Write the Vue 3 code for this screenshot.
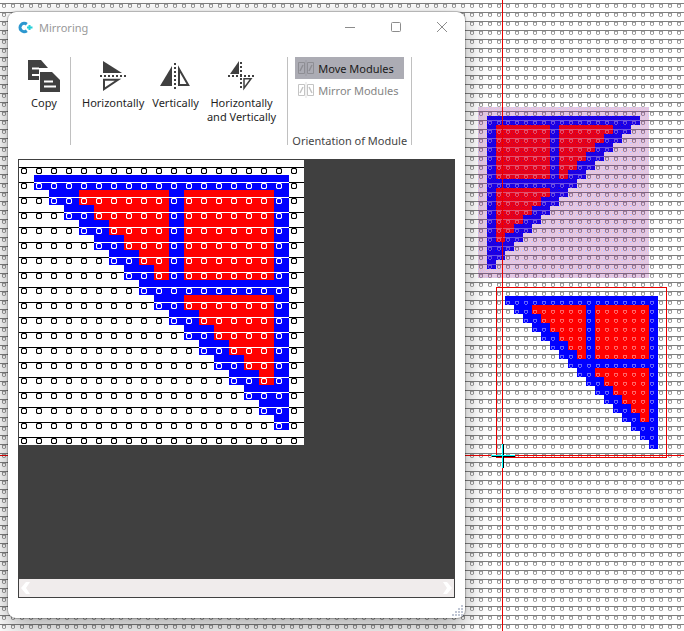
<script setup>
import { ref } from 'vue'

const COUNT = 17
const orientation = ref('move')

// Colour runs of the triangle: right angle at the top right corner.
function colourAt(row, col) {
  if (col < row) return null
  const frame = row === 0 || row === 7 || col === 9 || col === 16 || col - row < 2
  return frame ? '#0000ff' : '#ff0000'
}

function buildRuns(mirrored) {
  const runs = []
  for (let row = 0; row < COUNT; row++) {
    let last = null
    for (let col = 0; col < COUNT; col++) {
      const fill = colourAt(row, mirrored ? COUNT - 1 - col : col)
      if (last && last.fill === fill) last.w++
      else {
        last = fill ? { x: col, y: row, w: 1, fill } : null
        if (last) runs.push(last)
      }
    }
  }
  return runs
}

// Every second pixel of one 9 by 9 stitch cell.
function ditherPath(parity) {
  let d = ''
  for (let y = 0; y < 9; y++) {
    for (let x = 0; x < 9; x++) {
      if ((x + y) % 2 === parity) d += `M${x} ${y}h1v1h-1z`
    }
  }
  return d
}

const normal = buildRuns(false)
const mirrored = buildRuns(true)
const ditherBlue = ditherPath(0)
const ditherRed = ditherPath(1)
const ring = 'M3 8h4v1h-4zM3 13h4v1h-4zM2 9h1v4h-1zM7 9h1v4h-1z'
const ringSoft = 'M3 9h1v1h-1zM6 9h1v1h-1zM3 12h1v1h-1zM6 12h1v1h-1zM2 8h1v1h-1zM7 8h1v1h-1zM2 13h1v1h-1zM7 13h1v1h-1z'
</script>

<template>
  <main class="desktop">
    <svg class="board" aria-hidden="true" shape-rendering="crispEdges">
      <defs>
        <pattern id="grid" width="9" height="9" patternUnits="userSpaceOnUse">
          <rect width="9" height="9" fill="#fff" />
          <rect y="3" width="9" height="1" fill="#808080" />
          <path d="M2 4h1v3h-1zM5 4h1v3h-1z" fill="#999" />
          <path d="M3 4h2v1h-2zM3 7h2v1h-2z" fill="#aaa" />
          <path d="M2 7h1v1h-1zM5 7h1v1h-1z" fill="#ddd" />
        </pattern>
        <pattern id="rings" width="9" height="9" patternUnits="userSpaceOnUse">
          <path d="M2 4h1v3h-1zM5 4h1v3h-1zM3 4h2v1h-2zM3 7h2v1h-2z" fill="#fff" fill-opacity=".4" />
        </pattern>
        <pattern id="rows" width="9" height="9" patternUnits="userSpaceOnUse">
          <rect y="3" width="9" height="1" fill="#fff" fill-opacity=".4" />
        </pattern>
        <pattern id="dither" x="478" y="107" width="9" height="9" patternUnits="userSpaceOnUse">
          <path :d="ditherRed" fill="#ff0000" fill-opacity=".22" />
          <path :d="ditherBlue" fill="#0000ff" fill-opacity=".22" />
        </pattern>
      </defs>

      <rect width="100%" height="100%" fill="url(#grid)" />

      <g v-for="(r, i) in mirrored" :key="'m' + i">
        <rect :x="487 + r.x * 9" :y="116 + r.y * 9" :width="r.w * 9" height="9" :fill="r.fill" />
        <rect :x="487 + r.x * 9" :y="116 + r.y * 9" :width="r.w * 9" height="9" fill="url(#rings)" />
        <rect :x="487 + r.x * 9" :y="116 + r.y * 9" :width="r.w * 9" height="9" fill="url(#rows)" />
      </g>
      <rect x="478" y="107" width="171" height="171" fill="url(#dither)" />

      <g v-for="(r, i) in normal" :key="'n' + i">
        <rect :x="505 + r.x * 9" :y="296 + r.y * 9" :width="r.w * 9" height="9" :fill="r.fill" />
        <rect :x="505 + r.x * 9" :y="296 + r.y * 9" :width="r.w * 9" height="9" fill="url(#rings)" />
      </g>

      <path d="M496 287h171v171h-171zM497 288v169h169v-169z" fill="#e80000" fill-rule="evenodd" />
      <rect y="455" width="100%" height="1" fill="#e80000" />
      <rect x="502" width="1" height="100%" fill="#e80000" />
      <path d="M503 444h1v24h-1zM492 456h23v1h-23z" fill="#000" />
      <path d="M502 444h1v24h-1zM491 455h24v1h-24z" fill="#00ffff" />
    </svg>

    <section class="dialog" aria-labelledby="dialog-title">
      <header class="titlebar">
        <svg class="logo" width="16" height="14" viewBox="0 0 16 14" aria-hidden="true">
          <path d="M8.800 3.200A4.200 4.200 0 1 0 8.800 9.800" fill="none" stroke="#2c97cf" stroke-width="3" />
          <path d="M11.500 4v5M9 6.500h5.500" stroke="#25cfd8" stroke-width="2" />
        </svg>
        <h1 id="dialog-title">Mirroring</h1>
        <div class="window-buttons">
          <button type="button" aria-label="Minimize">
            <svg width="12" height="12" viewBox="0 0 12 12"><path d="M1 5.500h10" /></svg>
          </button>
          <button type="button" aria-label="Maximize">
            <svg width="12" height="12" viewBox="0 0 12 12"><rect x="1.500" y=".5" width="9" height="9" rx="1" /></svg>
          </button>
          <button type="button" aria-label="Close">
            <svg width="12" height="12" viewBox="0 0 12 12"><path d="M1 0l10 10M11 0L1 10" /></svg>
          </button>
        </div>
      </header>

      <div class="ribbon">
        <div class="group copy-group">
          <button type="button" class="command">
            <svg width="34" height="36" viewBox="0 0 34 36" aria-hidden="true">
              <path d="M1 2h13l7 8h-9v12H1z" fill="#404040" />
              <path d="M5 10.500h7M5 17h7" stroke="#fff" stroke-width="2" />
              <path d="M12 13h14l8 8v13H12z" fill="#fff" />
              <path d="M13 14h12l8 8v12H13z" fill="#404040" />
              <path d="M17 23.500h9M17 28.500h12" stroke="#fff" stroke-width="2" />
            </svg>
            <span>Copy</span>
          </button>
        </div>

        <div class="group mirror-group">
          <button type="button" class="command">
            <svg width="34" height="36" viewBox="0 0 34 36" aria-hidden="true">
              <path d="M7 3v12h19z" fill="#404040" />
              <path d="M4 18h26" stroke="#404040" stroke-width="2" stroke-dasharray="2 2" shape-rendering="crispEdges" />
              <path d="M8 21.800v9.400l14-9.400z" fill="none" stroke="#404040" stroke-width="2" />
            </svg>
            <span>Horizontally</span>
          </button>
          <button type="button" class="command">
            <svg width="34" height="36" viewBox="0 0 34 36" aria-hidden="true">
              <path d="M13 8v20H1z" fill="#404040" />
              <path d="M16 5v26" stroke="#404040" stroke-width="2" stroke-dasharray="2 2" shape-rendering="crispEdges" />
              <path d="M20 11v16h9.200z" fill="none" stroke="#404040" stroke-width="2" />
            </svg>
            <span>Vertically</span>
          </button>
          <button type="button" class="command">
            <svg width="34" height="36" viewBox="0 0 34 36" aria-hidden="true">
              <path d="M14 3v13H5z" fill="#404040" />
              <path d="M16 4v26M3 18h26" stroke="#404040" stroke-width="2" stroke-dasharray="2 2" shape-rendering="crispEdges" />
              <path d="M19 20.800v9.400l7-9.400z" fill="none" stroke="#404040" stroke-width="1.500" />
            </svg>
            <span>Horizontally<br />and Vertically</span>
          </button>
        </div>

        <div class="group module-group">
          <button type="button" class="option" :class="{ active: orientation === 'move' }" :aria-pressed="orientation === 'move'" @click="orientation = 'move'">
            <svg width="16" height="16" viewBox="0 0 16 16" aria-hidden="true">
              <path d="M.5 2.500h6v11h-6zM9.500 2.500h6v11h-6z" />
              <path d="M2 11l3-6M11 11l3-6" stroke-width="1.500" />
              <path d="M8 0v16" opacity=".5" />
            </svg>
            <span>Move Modules</span>
          </button>
          <button type="button" class="option" :class="{ active: orientation === 'mirror' }" :aria-pressed="orientation === 'mirror'" @click="orientation = 'mirror'">
            <svg width="16" height="16" viewBox="0 0 16 16" aria-hidden="true">
              <path d="M.5 2.500h6v11h-6zM9.500 2.500h6v11h-6z" />
              <path d="M2 11l3-6M11 5l3 6" stroke-width="1.500" />
              <path d="M8 0v16" opacity=".5" />
            </svg>
            <span>Mirror Modules</span>
          </button>
          <p class="caption">Orientation of Module</p>
        </div>
      </div>

      <div class="preview">
        <div class="canvas">
          <svg width="285" height="285" viewBox="0 0 285 285" role="img" aria-label="Pattern preview" shape-rendering="crispEdges">
            <defs>
              <pattern id="stitch-dark" width="15" height="15" patternUnits="userSpaceOnUse">
                <rect y="7" width="15" height="1" fill="#000" />
                <path :d="ring" fill="#000" />
                <path :d="ringSoft" fill="#000" fill-opacity=".35" />
              </pattern>
              <pattern id="stitch-light" width="15" height="15" patternUnits="userSpaceOnUse">
                <rect y="7" width="15" height="1" fill="#fff" />
                <path :d="ring" fill="#fff" />
                <path :d="ringSoft" fill="#fff" fill-opacity=".35" />
              </pattern>
            </defs>
            <rect width="285" height="285" fill="#fff" />
            <rect width="285" height="285" fill="url(#stitch-dark)" />
            <g v-for="(r, i) in normal" :key="i">
              <rect :x="15 + r.x * 15" :y="15 + r.y * 15" :width="r.w * 15" height="15" :fill="r.fill" />
              <rect :x="15 + r.x * 15" :y="15 + r.y * 15" :width="r.w * 15" height="15" fill="url(#stitch-light)" />
            </g>
          </svg>
        </div>
        <div class="scrollbar">
          <button type="button" aria-label="Scroll left">
            <svg width="10" height="12" viewBox="0 0 10 12"><path d="M5 0h4L5 6l4 6H5L0 6z" fill="#fff" /></svg>
          </button>
          <button type="button" aria-label="Scroll right">
            <svg width="10" height="12" viewBox="0 0 10 12"><path d="M5 0H1l4 6-4 6h4l5-6z" fill="#fff" /></svg>
          </button>
        </div>
      </div>

      <svg class="grip" width="12" height="12" viewBox="0 0 12 12" aria-hidden="true">
        <path d="M9 0h2v2h-2zM6 3h2v2h-2zM9 3h2v2h-2zM3 6h2v2h-2zM6 6h2v2h-2zM9 6h2v2h-2zM0 9h2v2h-2zM3 9h2v2h-2zM6 9h2v2h-2zM9 9h2v2h-2z" fill="#c0c6d4" />
      </svg>
    </section>
  </main>
</template>

<style>
body {
  margin: 0;
}
</style>

<style scoped>
.desktop {
  position: relative;
  box-sizing: border-box;
  display: flex;
  min-height: 100vh;
  padding: 12px 219px 13px 8px;
  overflow: hidden;
  font-family: "Noto Sans", "Open Sans", sans-serif;
  font-size: 11px;
  line-height: 14px;
  color: #1f1f1f;
}

.board {
  position: absolute;
  inset: 0;
  width: 100%;
  height: 100%;
}

.dialog {
  position: relative;
  display: flex;
  flex: 1;
  flex-direction: column;
  min-width: 0;
  box-sizing: border-box;
  padding: 0 10px 20px;
  background: #fff;
  border-radius: 8px;
  box-shadow: 0 0 1px 1px rgba(0, 0, 0, 0.25), 0 8px 24px rgba(0, 0, 0, 0.35);
}

button {
  padding: 0;
  border: 0;
  background: none;
  color: inherit;
  font: inherit;
}

.titlebar {
  display: flex;
  align-items: center;
  height: 31px;
}

.logo {
  margin-right: 5px;
}

h1 {
  margin: 0;
  font-size: 11px;
  font-weight: 400;
  color: #999;
}

.window-buttons {
  display: flex;
  margin-left: auto;
  margin-right: -10px;
}

.window-buttons button {
  display: grid;
  place-items: center;
  width: 46px;
  height: 31px;
}

.window-buttons svg {
  fill: none;
  stroke: #8c8c8c;
}

.ribbon {
  display: flex;
  padding: 14px 0;
}

.group {
  box-sizing: border-box;
  display: flex;
  height: 88px;
  border-right: 1px solid #c0c0c0;
}

.copy-group {
  padding: 0 7px;
}

.copy-group .command {
  width: 38px;
}

.mirror-group {
  padding: 0 7px;
}

.command {
  display: flex;
  flex-direction: column;
  align-items: center;
  gap: 2px;
  padding-top: 1px;
  text-align: center;
  white-space: nowrap;
}

.mirror-group .command {
  padding: 1px 4px 0;
}

.module-group {
  flex-direction: column;
  align-items: stretch;
  width: 124px;
  padding: 0 7px;
}

.option {
  display: flex;
  align-items: center;
  gap: 4px;
  height: 22px;
  padding: 0 3px;
  color: #858585;
  white-space: nowrap;
}

.option span {
  padding-top: 2px;
}

.option svg {
  fill: none;
  stroke: #c4c4c4;
}

.option.active {
  background: #acacb4;
  color: #1a1a1a;
}

.option.active svg {
  stroke: #8e8e94;
}

.caption {
  margin: auto -4px -3px;
  color: #444;
  text-align: center;
  white-space: nowrap;
}

.preview {
  display: flex;
  flex: 1;
  flex-direction: column;
  border: 1px solid #404040;
  background: #404040;
}

.canvas {
  flex: 1;
}

.canvas svg {
  display: block;
}

.scrollbar {
  display: flex;
  align-items: center;
  justify-content: space-between;
  height: 18px;
  padding: 0 2px;
  background: #f0ecec;
}

.scrollbar svg {
  display: block;
}

.grip {
  position: absolute;
  right: 1px;
  bottom: 1px;
}
</style>
